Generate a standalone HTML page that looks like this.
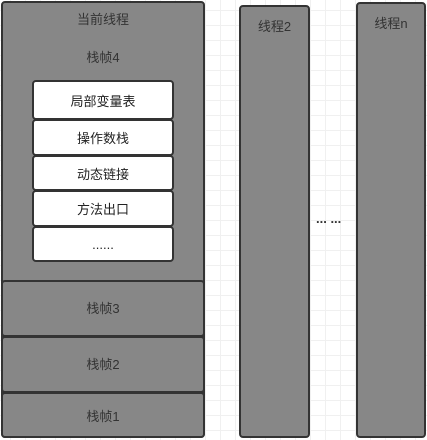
<!DOCTYPE html>
<html><head><meta charset="utf-8"><style>
html,body{margin:0;padding:0}
body{width:427px;height:439px;position:relative;overflow:hidden;background-color:#fff;
background-image:linear-gradient(#f0f0f0 1px,transparent 1px),linear-gradient(90deg,#f0f0f0 1px,transparent 1px);
background-size:15px 15px;background-position:10px 10px;
font-family:"Liberation Sans","Noto Sans CJK SC",sans-serif;font-size:13px;color:#333}
.b{position:absolute;box-sizing:border-box;border:2px solid #333;border-radius:4px;background:#878787;text-align:center}
.w{position:absolute;box-sizing:border-box;border:2px solid #333;border-radius:4px;background:#fff;left:32px;width:142px;display:flex;align-items:center;justify-content:center;color:#222}
.t{position:absolute;text-align:center}
</style></head><body>
<div class="b" style="left:1px;top:1px;width:204px;height:437px"></div>
<div class="t" style="left:1px;width:204px;top:9px">当前线程</div>
<div class="t" style="left:1px;width:204px;top:47px">栈帧4</div>
<div class="w" style="top:80px;height:40px">局部变量表</div>
<div class="w" style="top:119px;height:37px">操作数栈</div>
<div class="w" style="top:155px;height:36px">动态链接</div>
<div class="w" style="top:190px;height:37px">方法出口</div>
<div class="w" style="top:226px;height:36px">......</div>
<div class="b" style="left:1px;top:280px;width:204px;height:57px;line-height:53px">栈帧3</div>
<div class="b" style="left:1px;top:336px;width:204px;height:57px;line-height:53px">栈帧2</div>
<div class="b" style="left:1px;top:392px;width:204px;height:46px;line-height:46px">栈帧1</div>
<div class="b" style="left:239px;top:5px;width:71px;height:433px;padding-top:9px">线程2</div>
<div class="b" style="left:356px;top:2px;width:70px;height:436px;padding-top:9px">线程n</div>
<div style="position:absolute;left:316px;top:211px;font-weight:bold;color:#333">... ...</div>
</body></html>
